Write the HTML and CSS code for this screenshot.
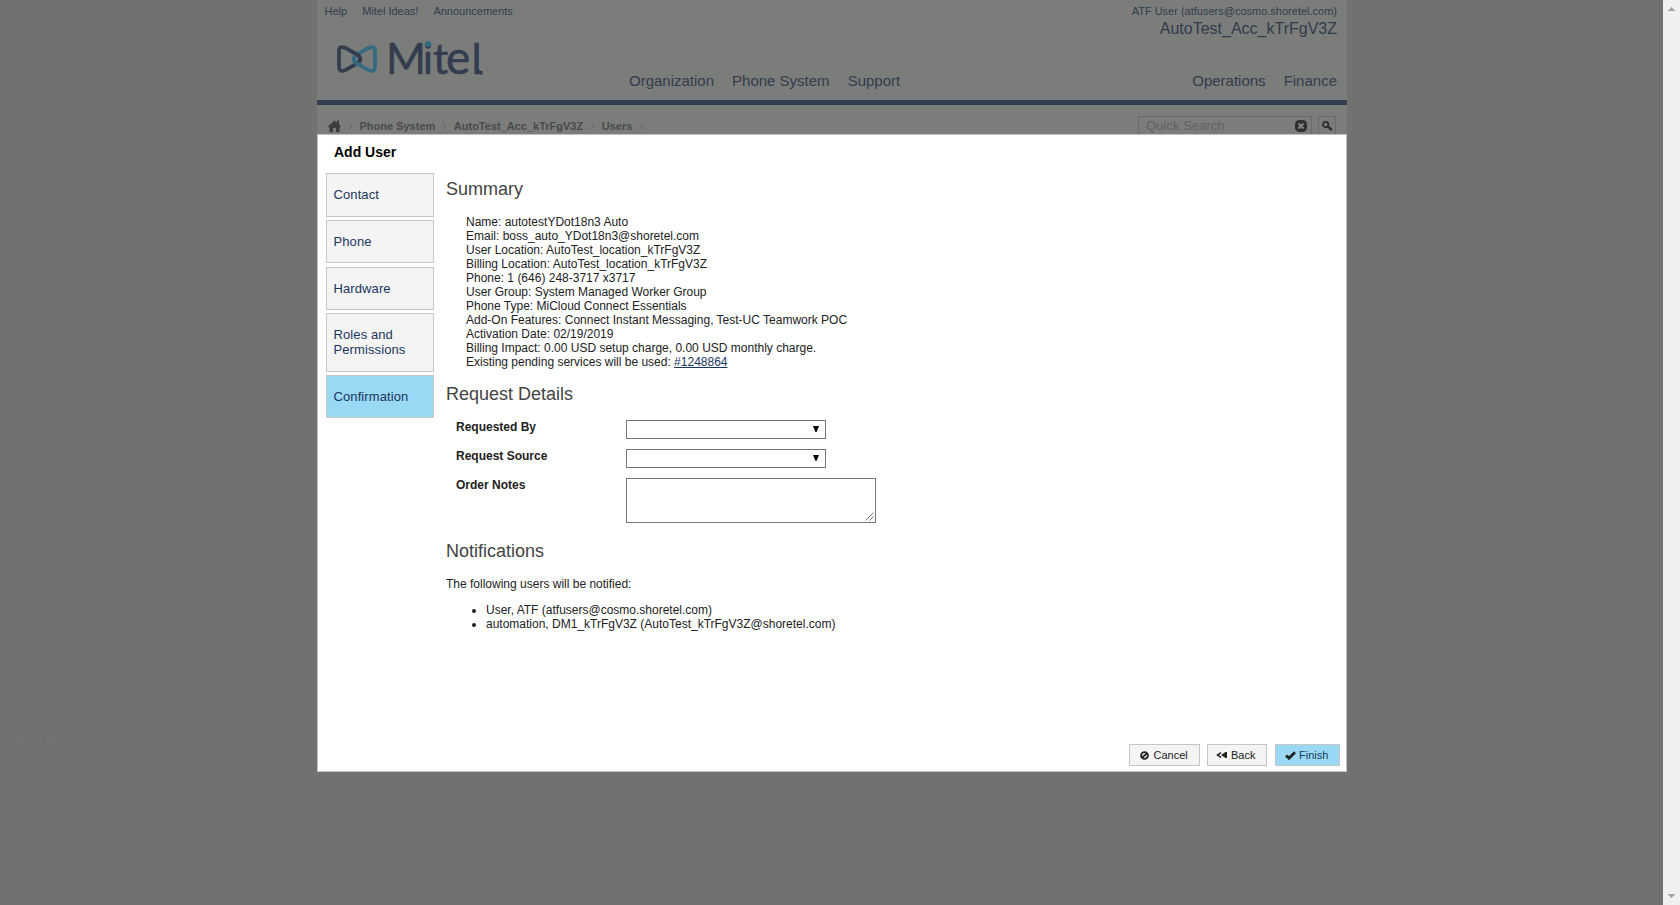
FILE: index.html
```html
<!DOCTYPE html>
<html lang="en">
<head>
<meta charset="utf-8">
<title>Add User</title>
<link rel="stylesheet" href="styles.css">
</head>
<body>
<div class="viewport">
  <div class="page">
    <header class="header">
      <div class="topbar">
        <nav class="links"><a>Help</a><a>Mitel Ideas!</a><a>Announcements</a></nav>
        <div class="account"><span class="who">ATF User (atfusers@cosmo.shoretel.com)</span><span class="acc">AutoTest_Acc_kTrFgV3Z</span></div>
      </div>
      <div class="logo">
        <svg class="mark" width="40" height="28" viewBox="0 0 40 28" fill="none" stroke-width="3.800">
          <path class="m-dark" d="M8 2.700 L21 10 Q25.500 14 21 18 L8 25.300 Q2 27.500 2 22 V6 Q2 .5 8 2.700Z"/>
          <path class="m-light" d="M32 2.700 L19 10 Q14.500 14 19 18 L32 25.300 Q38 27.500 38 22 V6 Q38 .5 32 2.700Z"/>
          <path class="m-dark" d="M14 6.050 L21 10 Q24.800 13.500 22 17"/>
        </svg>
        <svg class="word" width="104" height="42" viewBox="0 0 104 42">
          <text y="36" x="2 38.800 49 62 87.500">Mit<tspan class="e">e</tspan>l</text>
          <path class="tail" d="M92.700 30 Q92.700 35 98.500 34.800"/>
          <circle cx="44.200" cy="6" r="2.800"/>
        </svg>
      </div>
      <nav class="menu">
        <a>Organization</a><a>Phone System</a><a>Support</a><span class="fill"></span><a>Operations</a><a>Finance</a>
      </nav>
    </header>
    <div class="crumbs">
      <svg class="home" width="13" height="12" viewBox="0 0 13 12"><path d="M0 6.500 L6.500 0.500 L9 2.800 V0.500 H11 V4.600 L13 6.500 L12 7.400 L11.500 7 V12 H8 V8 H5 V12 H1.500 V7 L1 7.400Z"/></svg>
      <svg class="sep" width="5" height="8" viewBox="0 0 5 8"><path d="M.7.700 L4 4 L.7 7.300"/></svg>
      <b class="c1">Phone System</b>
      <svg class="sep" width="5" height="8" viewBox="0 0 5 8"><path d="M.7.700 L4 4 L.7 7.300"/></svg>
      <b class="c2">AutoTest_Acc_kTrFgV3Z</b>
      <svg class="sep" width="5" height="8" viewBox="0 0 5 8"><path d="M.7.700 L4 4 L.7 7.300"/></svg>
      <b class="c3">Users</b>
      <svg class="sep" width="5" height="8" viewBox="0 0 5 8"><path d="M.7.700 L4 4 L.7 7.300"/></svg>
      <span class="fill"></span>
      <div class="search"><span>Quick Search</span>
        <svg width="12" height="12" viewBox="0 0 12 12"><rect width="12" height="12" rx="4.500" fill="#2e2f2e"/><path d="M3.500 3.500 L8.500 8.500 M8.500 3.500 L3.500 8.500" stroke="#858785" stroke-width="2"/></svg>
      </div>
      <div class="go"><svg width="11" height="10" viewBox="0 0 11 10" fill="none" stroke="#2e2f2e"><circle cx="3.700" cy="3.500" r="2.700" stroke-width="1.800"/><path d="M5.800 5.500 L9.800 9" stroke-width="2.400"/></svg></div>
    </div>
  </div>
  <div class="version">19.03.1.45</div>
</div>
<div class="scrollbar">
  <svg width="7" height="4" viewBox="0 0 7 4"><path d="M3 0h1v1h1v1h1v1h1v1H0V3h1V2h1V1h1z"/></svg>
  <svg width="7" height="4" viewBox="0 0 7 4"><path d="M0 0h7v1H6v1H5v1H4v1H3V3H2V2H1V1H0z"/></svg>
</div>

<section class="dialog">
  <h1 class="title">Add User</h1>
  <div class="body">
    <nav class="steps">
      <a class="step">Contact</a><a class="step">Phone</a><a class="step">Hardware</a><a class="step tall">Roles and Permissions</a><a class="step current">Confirmation</a>
    </nav>
    <div class="content">
      <h2>Summary</h2>
      <div class="summary">
        <div>Name: autotestYDot18n3 Auto</div>
        <div>Email: boss_auto_YDot18n3@shoretel.com</div>
        <div>User Location: AutoTest_location_kTrFgV3Z</div>
        <div>Billing Location: AutoTest_location_kTrFgV3Z</div>
        <div>Phone: 1 (646) 248-3717 x3717</div>
        <div>User Group: System Managed Worker Group</div>
        <div>Phone Type: MiCloud Connect Essentials</div>
        <div>Add-On Features: Connect Instant Messaging, Test-UC Teamwork POC</div>
        <div>Activation Date: 02/19/2019</div>
        <div>Billing Impact: 0.00 USD setup charge, 0.00 USD monthly charge.</div>
        <div>Existing pending services will be used: <a class="order">#1248864</a></div>
      </div>
      <h2>Request Details</h2>
      <div class="form">
        <label>Requested By</label><div class="select"><svg width="6" height="6" viewBox="0 0 6 6"><path d="M0 0H6L3.500 6H2.500Z"/></svg></div>
        <label>Request Source</label><div class="select"><svg width="6" height="6" viewBox="0 0 6 6"><path d="M0 0H6L3.500 6H2.500Z"/></svg></div>
        <label>Order Notes</label><div class="notes"><svg width="9" height="9" viewBox="0 0 9 9"><path d="M.5 8.500 L8.500 .5 M4.500 8.500 L8.500 4.500"/></svg></div>
      </div>
      <h2>Notifications</h2>
      <p>The following users will be notified:</p>
      <ul><li>User, ATF (atfusers@cosmo.shoretel.com)</li><li>automation, DM1_kTrFgV3Z (AutoTest_kTrFgV3Z@shoretel.com)</li></ul>
    </div>
  </div>
  <footer class="actions">
    <div class="btn cancel"><svg width="9" height="9" viewBox="0 0 9 9" fill="none" stroke="#222" stroke-width="1.900"><circle cx="4.500" cy="4.500" r="3.400"/><path d="M2.300 6.700 L6.700 2.300"/></svg>Cancel</div>
    <div class="btn back"><svg width="11" height="6" viewBox="0 0 11 6"><path d="M5 .7 L1.500 3 L5 5.300" fill="none" stroke="#222" stroke-width="1.500"/><path d="M5 3 L9.500 0H11V6H9.500Z" fill="#222"/></svg>Back</div>
    <div class="btn finish"><svg width="11" height="9" viewBox="0 0 11 9" fill="none" stroke="#222" stroke-width="2.900"><path d="M1 4.500 L4 7.200 L10 1.200"/></svg>Finish</div>
  </footer>
</section>
</body>
</html>
```
FILE: styles.css
```css
* { box-sizing: border-box; }
body {
  margin: 0;
  height: 905px;
  display: flex;
  overflow: hidden;
  position: relative;
  font-family: "Liberation Sans", Arial, sans-serif;
  font-size: 12px;
  line-height: 14px;
  color: #222;
}
.viewport {
  width: 1663px;
  height: 905px;
  background: #707270;
  color: #323b4d;
}
.page {
  width: 1030px;
  height: 725px;
  margin-left: 317px;
  background: #7b7d7b;
}
.header {
  height: 105px;
  border-bottom: 5px solid #343d50;
  display: flex;
  flex-direction: column;
}
.topbar {
  display: flex;
  justify-content: space-between;
  height: 38px;
  padding: 4px 10px 0 7.500px;
  font-size: 11px;
}
.links { display: flex; gap: 15px; }
.account {
  display: flex;
  flex-direction: column;
  align-items: flex-end;
}
.acc { font-size: 16px; line-height: 22px; }
.logo {
  display: flex;
  height: 34px;
  padding-left: 20px;
}
.mark { margin-top: 7px; }
.m-dark { stroke: #343d50; }
.m-light { stroke: #356b80; }
.word {
  margin-left: 7px;
  overflow: visible;
  font: 43px Lato, sans-serif;
  fill: #343d50;
  stroke: #343d50;
  stroke-width: .6;
}
.word .e { font-size: 46px; }
.word .tail { fill: none; stroke-width: 3.800; }
.word circle { fill: #356b80; stroke: #356b80; }
.menu {
  display: flex;
  gap: 18px;
  padding: 0 10px 0 312px;
  font-size: 15px;
  line-height: 18px;
}
.fill { flex: 1; }
.crumbs {
  display: flex;
  align-items: center;
  height: 42px;
  padding: 0 11px;
  font-size: 11px;
  color: #484a49;
}
.home { fill: #3b3c3b; }
.sep { fill: none; stroke: #666866; margin: 0 6.500px 0 7px; flex: none; }
.search {
  width: 174px;
  height: 20px;
  border: 1px solid #696b69;
  padding: 0 4px 0 7px;
  display: flex;
  align-items: center;
  justify-content: space-between;
  font-size: 13px;
  letter-spacing: .05px;
  color: #606260;
}
.go {
  width: 18px;
  height: 20px;
  margin-left: 6px;
  border: 1px solid #696b69;
  display: flex;
  justify-content: center;
  align-items: center;
}
.version {
  padding: 7px 0 0 16px;
  font-size: 8px;
  color: #757575;
}
.scrollbar {
  width: 17px;
  height: 905px;
  background: #f0f0f0;
  display: flex;
  flex-direction: column;
  justify-content: space-between;
  align-items: center;
  padding: 7px 0;
  fill: #a3a3a3;
}
.dialog {
  position: absolute;
  left: 317px;
  top: 134px;
  width: 1030px;
  height: 638px;
  background: #fff;
  border: 1px solid #c3c3c3;
  display: flex;
  flex-direction: column;
}
.title {
  margin: 0;
  padding: 9px 0 0 16px;
  height: 38.200px;
  font-size: 14px;
  line-height: 17px;
  color: #000;
}
.body { display: flex; flex: 1; }
.steps {
  width: 116px;
  padding-left: 8px;
  display: flex;
  flex-direction: column;
  gap: 3.300px;
}
.step {
  height: 43.400px;
  border: 1px solid #c6c6c6;
  background: #f4f4f4;
  padding: 0 6.500px;
  display: flex;
  align-items: center;
  font-size: 13px;
  line-height: 15px;
  letter-spacing: .1px;
  color: #1b365d;
}
.tall { height: 58.400px; }
.current { background: #9ad9f4; }
.content { padding-left: 12px; }
h2 {
  margin: 0;
  font-size: 18px;
  line-height: 20px;
  font-weight: 400;
  color: #444;
}
.content > h2:first-child { margin-top: 5.800px; }
.summary { margin: 16px 0 15px 20px; }
.order { color: #1b365d; text-decoration: underline; }
.form {
  display: grid;
  grid-template-columns: 170px 250px;
  row-gap: 10px;
  margin: 16px 0 18px 10px;
}
label { font-weight: 700; }
.select {
  width: 200px;
  height: 19px;
  border: 1px solid #777;
  padding: 5px 6px 0 0;
  display: flex;
  justify-content: flex-end;
}
.notes {
  height: 45px;
  border: 1px solid #777;
  display: flex;
  justify-content: flex-end;
  align-items: flex-end;
  padding: 1px;
}
.notes path { fill: none; stroke: #555; stroke-width: .8; }
p { margin: 16px 0 12px; }
ul { margin: 0; padding-left: 40px; }
.actions {
  display: flex;
  height: 27px;
  padding-right: 6px;
  justify-content: flex-end;
}
.btn {
  height: 22px;
  border: 1px solid #c6c6c6;
  background: #f4f4f4;
  display: flex;
  align-items: center;
  font-size: 11px;
  padding-left: 9.500px;
}
.cancel { width: 71px; gap: 5px; }
.back { width: 60px; margin-left: 7px; padding-left: 8px; gap: 4px; }
.finish { width: 65px; margin-left: 8px; padding-left: 8.500px; gap: 3.500px; background: #9ad9f4; color: #1b365d; }
```
